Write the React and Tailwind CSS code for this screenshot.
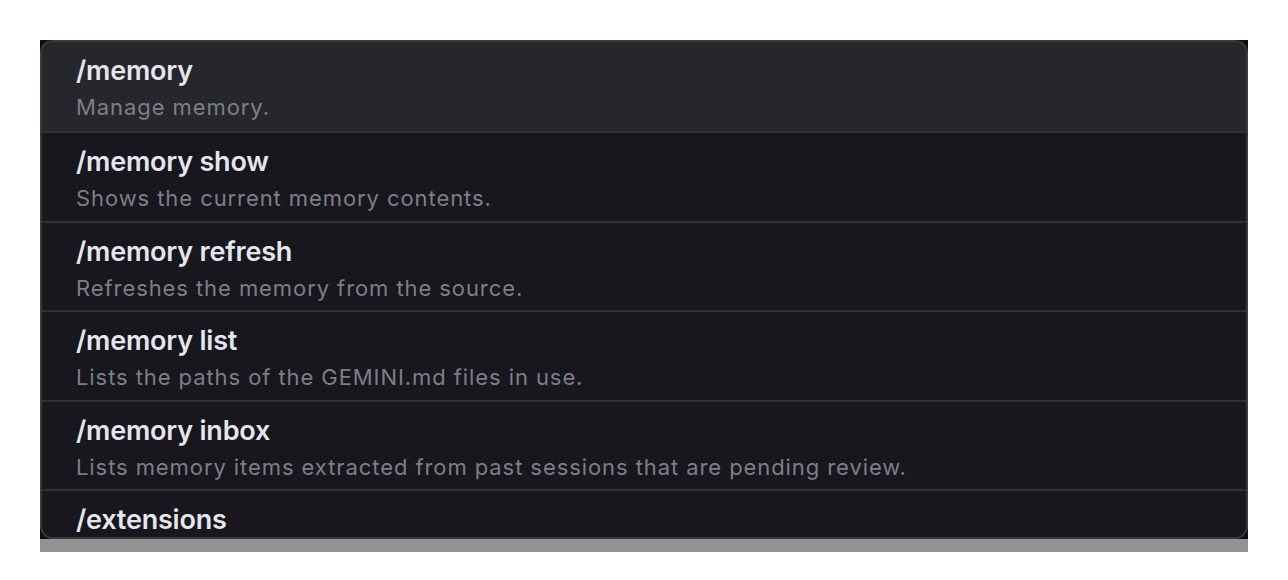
import React from "react";

const items = [
  { cmd: "/memory", desc: "Manage memory.", active: true },
  { cmd: "/memory show", desc: "Shows the current memory contents." },
  { cmd: "/memory refresh", desc: "Refreshes the memory from the source." },
  { cmd: "/memory list", desc: "Lists the paths of the GEMINI.md files in use." },
  { cmd: "/memory inbox", desc: "Lists memory items extracted from past sessions that are pending review." },
  { cmd: "/extensions", desc: "" },
];

export default function App() {
  return (
    <div className="w-[1288px] h-[580px] bg-white pt-[40px] pl-[40px]" style={{ fontFamily: "Inter, 'Noto Sans', sans-serif" }}>
      <div className="w-[1208px] h-[499px] bg-[#0f0f11]">
        <div className="h-full rounded-[13px] border-2 border-[#3a3a3d] bg-[#17171d] overflow-hidden flex flex-col">
          {items.map((it, i) => (
            <div
              key={i}
              className={
                "shrink-0 px-[34px] pt-[13px] border-b-2 border-[#303036] " +
                (i === 0 ? "h-[91px] bg-[#26272c]" : "h-[89.5px] bg-[#17171d]")
              }
            >
              <div className="text-[27px] leading-[32px] font-semibold text-[#e5e6ed] tracking-[-0.2px]">{it.cmd}</div>
              {it.desc && (
                <div className="mt-[6px] text-[22px] leading-[28px] text-[#7d7f88] tracking-[0.92px]">{it.desc}</div>
              )}
            </div>
          ))}
        </div>
      </div>
      <div className="w-[1208px] h-[13px] bg-[#929292]" />
    </div>
  );
}
